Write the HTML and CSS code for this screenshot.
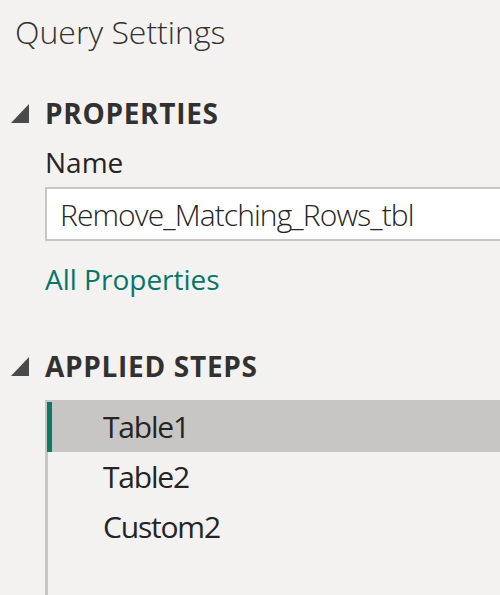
FILE: index.html
```html
<!DOCTYPE html>
<html>
<head>
<meta charset="utf-8">
<link rel="stylesheet" href="styles.css">
</head>
<body>
<div class="pane">
  <div class="title">Query Settings</div>
  <div class="section-head props-head">
    <svg class="tri" width="18" height="19" viewBox="0 0 18 19"><polygon points="18,0 18,19 0,19" fill="#4a4a4a"/></svg>
    <span>PROPERTIES</span>
  </div>
  <div class="field-label">Name</div>
  <div class="name-box">Remove_Matching_Rows_tbl</div>
  <div class="all-props">All Properties</div>
  <div class="section-head steps-head">
    <svg class="tri" width="18" height="19" viewBox="0 0 18 19"><polygon points="18,0 18,19 0,19" fill="#4a4a4a"/></svg>
    <span>APPLIED STEPS</span>
  </div>
  <div class="steps">
    <div class="step selected"><div class="step-inner">Table1</div></div>
    <div class="step">Table2</div>
    <div class="step">Custom2</div>
  </div>
</div>
</body>
</html>
```

FILE: styles.css
```css
html, body {
  margin: 0;
  padding: 0;
  background: #f3f2f1;
}
body {
  width: 500px;
  height: 595px;
  overflow: hidden;
  font-family: "Open Sans", "Noto Sans", sans-serif;
  color: #252423;
}
.pane {
  display: flex;
  flex-direction: column;
}
.title {
  margin-top: 12px;
  padding-left: 15px;
  font-size: 32px;
  font-weight: 300;
  line-height: 40px;
  color: #323130;
  white-space: nowrap;
}
.section-head {
  display: flex;
  align-items: center;
  height: 32px;
  font-size: 28px;
  font-weight: 700;
  line-height: 32px;
  letter-spacing: 0.7px;
  color: #323130;
  white-space: nowrap;
}
.props-head {
  margin-top: 45px;
}
.steps-head {
  margin-top: 55px;
}
.tri {
  margin-left: 11px;
  margin-right: 16px;
  flex: none;
}
.field-label {
  margin-top: 17px;
  padding-left: 45px;
  font-size: 28px;
  line-height: 32px;
}
.name-box {
  margin-top: 9px;
  margin-left: 45px;
  margin-right: -20px;
  border: 2px solid #c8c6c4;
  background: #ffffff;
  height: 48px;
  padding-top: 2px;
  padding-left: 13px;
  font-size: 30px;
  font-weight: 300;
  line-height: 48px;
  letter-spacing: -0.9px;
  white-space: nowrap;
}
.all-props {
  margin-top: 22px;
  padding-left: 45px;
  font-size: 28px;
  line-height: 32px;
  color: #077568;
}
.steps {
  margin-top: 18px;
  margin-left: 45px;
  border-left: 3px solid #c8c6c4;
  height: 200px;
}
.step {
  height: 50px;
  padding-left: 55px;
  font-size: 30px;
  line-height: 50px;
  letter-spacing: -1.2px;
  white-space: nowrap;
}
.step.selected {
  margin-left: -3px;
  height: 50px;
  padding: 2px 0 0 2px;
  background: #c8c6c4;
}
.step-inner {
  border-left: 5px solid #0e7a64;
  padding-left: 51px;
  height: 50px;
}
```
